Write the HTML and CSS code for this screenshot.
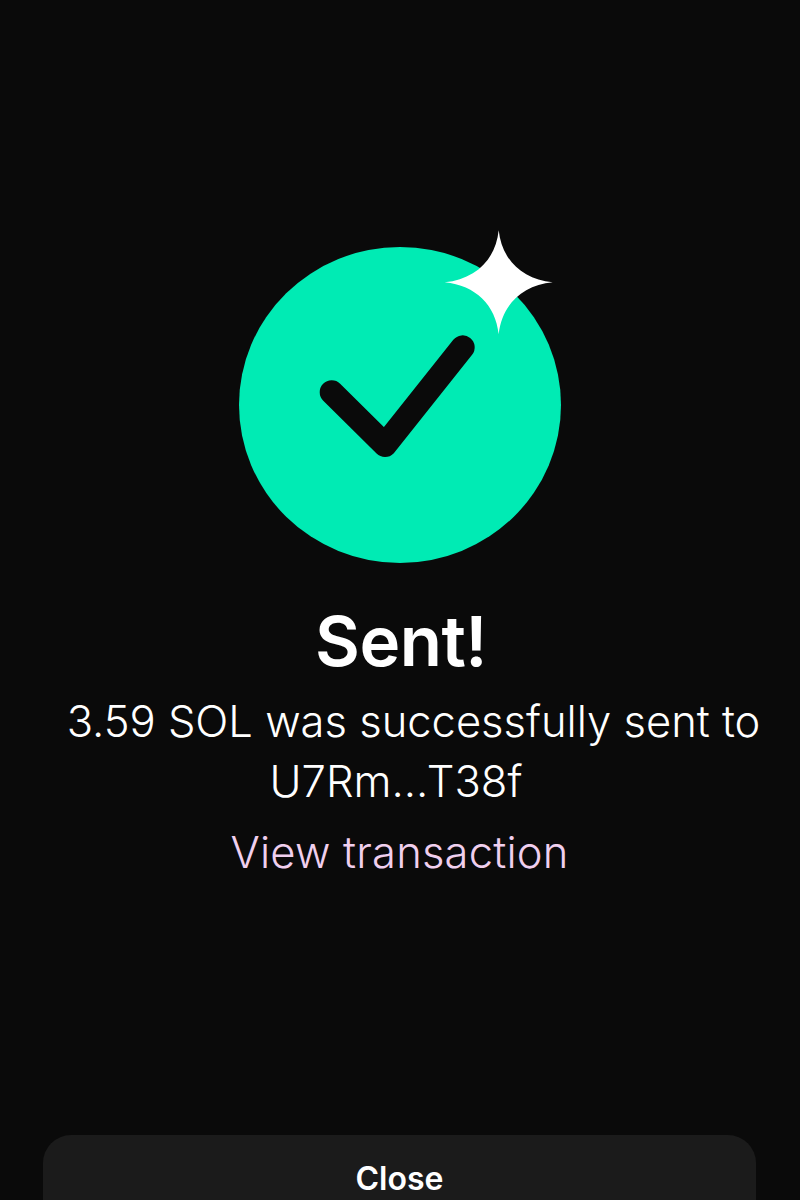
FILE: index.html
```html
<!DOCTYPE html>
<html lang="en">
<head>
  <meta charset="UTF-8">
  <meta name="viewport" content="width=device-width, initial-scale=1.0">
  <title>Sent</title>
  <link rel="stylesheet" href="styles.css">
</head>
<body>
  <div class="screen">
    <div class="result">
      <svg class="badge" width="322" height="316" viewBox="0 0 322 316">
        <ellipse cx="161" cy="158" rx="161" ry="158" fill="#00ebb4" />
        <path d="M92.7 145.3 L146 198 L223.7 100.3" fill="none" stroke="#0a0a0a" stroke-width="24" stroke-linecap="round" stroke-linejoin="round" />
        <path transform="translate(259.7 35.3)" d="M0-52C3-23 23-3 54 0C23 3 3 23 0 52C-3 23-23 3-54 0C-23-3-3-23 0-52Z" fill="#fff" />
      </svg>
      <h1 class="title">Sent!</h1>
      <p class="message">
        <span class="line-first">3.59 SOL was successfully sent to</span>
        <span class="line-second">U7Rm...T38f</span>
      </p>
      <a class="link" href="#">View transaction</a>
    </div>
    <button class="close" type="button">Close</button>
  </div>
</body>
</html>
```

FILE: styles.css
```css
* {
  margin: 0;
  padding: 0;
  box-sizing: border-box;
}
html,
body {
  height: 100%;
  overflow: hidden;
}
body {
  background-color: #0a0a0a;
  font-family: Inter, "Liberation Sans", sans-serif;
  color: #fff;
}
.screen {
  height: 1200px;
  padding: 247px 44px 0 43px;
  display: flex;
  flex-direction: column;
  overflow: hidden;
}
.result {
  height: 888px;
  flex: none;
  display: flex;
  flex-direction: column;
  align-items: center;
}
.badge {
  display: block;
  flex: none;
  overflow: visible;
}
.title {
  margin-top: 36px;
  margin-left: 3px;
  font-size: 69px;
  line-height: 84px;
  font-weight: 600;
  letter-spacing: -0.5px;
}
.message {
  margin-top: 8px;
  font-size: 43.5px;
  line-height: 60px;
  font-weight: 350;
  text-align: center;
  white-space: nowrap;
}
.message span {
  display: block;
}
.line-first {
  margin-left: 28px;
}
.line-second {
  margin-left: -7px;
}
.link {
  margin-top: 11px;
  font-size: 43.5px;
  line-height: 60px;
  font-weight: 350;
  letter-spacing: 0.2px;
  color: #f0cfee;
  text-decoration: none;
}
.close {
  flex: none;
  height: 65px;
  padding-top: 22px;
  border: none;
  border-radius: 28px 28px 0 0;
  background-color: #1b1b1b;
  color: #fff;
  font-family: inherit;
  font-size: 32px;
  line-height: 38px;
  font-weight: 600;
  display: block;
  text-align: center;
}
```
